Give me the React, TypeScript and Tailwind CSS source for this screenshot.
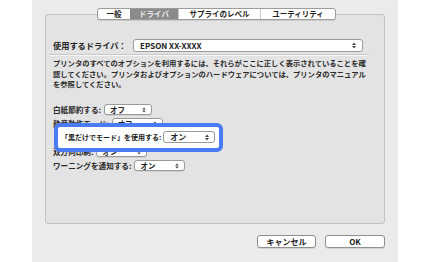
import React from 'react';

const FONT = 'font-["Noto_Sans_CJK_JP","Liberation_Sans",sans-serif]';

// tiny up/down arrows on popup buttons
const Arrows: React.FC<{ size?: number }> = ({ size = 7 }) => (
  <svg width={4} height={size} viewBox="0 0 4 7" className="shrink-0">
    <path d="M0 3 L2 0.5 L4 3 Z" fill="#444" />
    <path d="M0 4 L2 6.5 L4 4 Z" fill="#444" />
  </svg>
);

interface PopupProps {
  value: string;
  className?: string;
}

const Popup: React.FC<PopupProps> = ({ value, className = '' }) => (
  <div
    className={`shrink-0 flex items-center justify-between h-[11px] pl-[5px] pr-[5px] bg-white border border-[#9a9a9a] rounded-[3px] shadow-[0_1px_0_rgba(0,0,0,0.08)] ${className}`}
  >
    <span className="text-[7.5px] leading-none font-bold text-[#222] whitespace-nowrap">{value}</span>
    <Arrows size={6} />
  </div>
);

const options = [
  { label: '白紙節約する:', value: 'オフ', w: 'w-[48px]', hidden: false },
  { label: '静音動作モード:', value: 'オフ', w: 'w-[51px]', hidden: false },
  { label: '「黒だけでモード」を使用する:', value: 'オン', w: 'w-[51px]', hidden: true },
  { label: '双方向印刷:', value: 'オン', w: 'w-[51px]', hidden: false },
  { label: 'ワーニングを通知する:', value: 'オン', w: 'w-[51px]', hidden: false }
];

const tabs = [
  { t: '一般', w: 'w-[32px]' },
  { t: 'ドライバ', w: 'w-[48px]' },
  { t: 'サプライのレベル', w: 'w-[82px]' },
  { t: 'ユーティリティ', w: 'w-[75px]' }
];

export default function App() {
  return (
    <div className={`w-[430px] h-[262px] bg-white ${FONT}`}>
      <div className="ml-[32px] w-[366px] h-[262px] bg-[#ebebeb] pt-[8px] px-[13px] flex flex-col">
        {/* Tabs */}
        <div className="relative z-10 flex justify-center h-[12px] pl-[3px]">
          <div className="flex h-[12px] bg-white border border-[#9c9c9c] rounded-[3px] overflow-hidden shadow-[0_1px_0_rgba(0,0,0,0.1)]">
            {tabs.map((t, i) => (
              <div
                key={t.t}
                className={`flex items-center justify-center whitespace-nowrap text-[7.5px] leading-none font-bold ${t.w} ${
                  i === 1 ? 'bg-[#8b8b8b] text-[#eeeeee]' : 'text-[#222]'
                } ${i > 1 ? 'border-l border-[#c8c8c8]' : ''}`}
              >
                {t.t}
              </div>
            ))}
          </div>
        </div>

        {/* Group box */}
        <div className="-mt-[6px] h-[210px] bg-[#e3e3e3] border border-[#c2c2c2] rounded-[3px] pt-[24px] px-[7px]">
          <div className="flex items-center h-[13px]">
            <span className="w-[80px] shrink-0 whitespace-nowrap text-[8.2px] leading-none font-bold text-[#222]">使用するドライバ：</span>
            <div className="flex items-center justify-between w-[230px] h-[13px] pl-[6px] pr-[6px] bg-white border border-[#9a9a9a] rounded-[3px]">
              <span className="text-[8px] leading-none font-bold text-[#222] whitespace-nowrap">EPSON XX-XXXX</span>
              <Arrows />
            </div>
          </div>
          <div className="mt-[2px] -mx-[4px] w-[320px] h-[2px] bg-[#c9c9c9] border-b border-[#f6f6f6]" />

          <p className="mt-[2px] whitespace-nowrap text-[7.3px] leading-[10.5px] font-bold text-[#2a2a2a]">
            プリンタのすべてのオプションを利用するには、それらがここに正しく表示されていることを確
            <br />
            認してください。プリンタおよびオプションのハードウェアについては、プリンタのマニュアル
            <br />
            を参照してください。
          </p>

          {/* Options */}
          <div className="relative mt-[13px] flex flex-col">
            {options.map(o => (
              <div key={o.label} className={`flex items-center gap-[3px] h-[14px] ${o.hidden ? 'invisible' : ''}`}>
                <span className="whitespace-nowrap text-[7.6px] leading-none font-bold text-[#2a2a2a]">{o.label}</span>
                <Popup value={o.value} className={o.w} />
              </div>
            ))}

            {/* Highlight callout */}
            <div className="absolute left-[1px] top-[20px] w-[169px] h-[29px] bg-white border-[4px] border-[#4a7bf2] rounded-[6px] flex items-center gap-[2px] pl-[3px]">
              <span className="whitespace-nowrap text-[7px] leading-none font-bold text-[#222]">「黒だけでモード」を使用する:</span>
              <div className="shrink-0 flex items-center justify-between w-[52px] h-[12px] pl-[6px] pr-[5px] bg-white border border-[#9a9a9a] rounded-[3px]">
                <span className="text-[8px] leading-none font-bold text-[#222] whitespace-nowrap">オン</span>
                <Arrows />
              </div>
            </div>
          </div>
        </div>

        {/* Buttons */}
        <div className="mt-[11px] flex justify-end gap-[9px]">
          <button className="w-[59px] h-[13px] bg-white border border-[#8f8f8f] rounded-[3px] text-[8px] leading-none font-bold text-[#222] whitespace-nowrap shadow-[0_1px_0_rgba(0,0,0,0.1)]">
            キャンセル
          </button>
          <button className="w-[60px] h-[13px] bg-white border border-[#8f8f8f] rounded-[3px] text-[8px] leading-none font-bold text-[#222] shadow-[0_1px_0_rgba(0,0,0,0.1)]">
            OK
          </button>
        </div>
      </div>
    </div>
  );
}
